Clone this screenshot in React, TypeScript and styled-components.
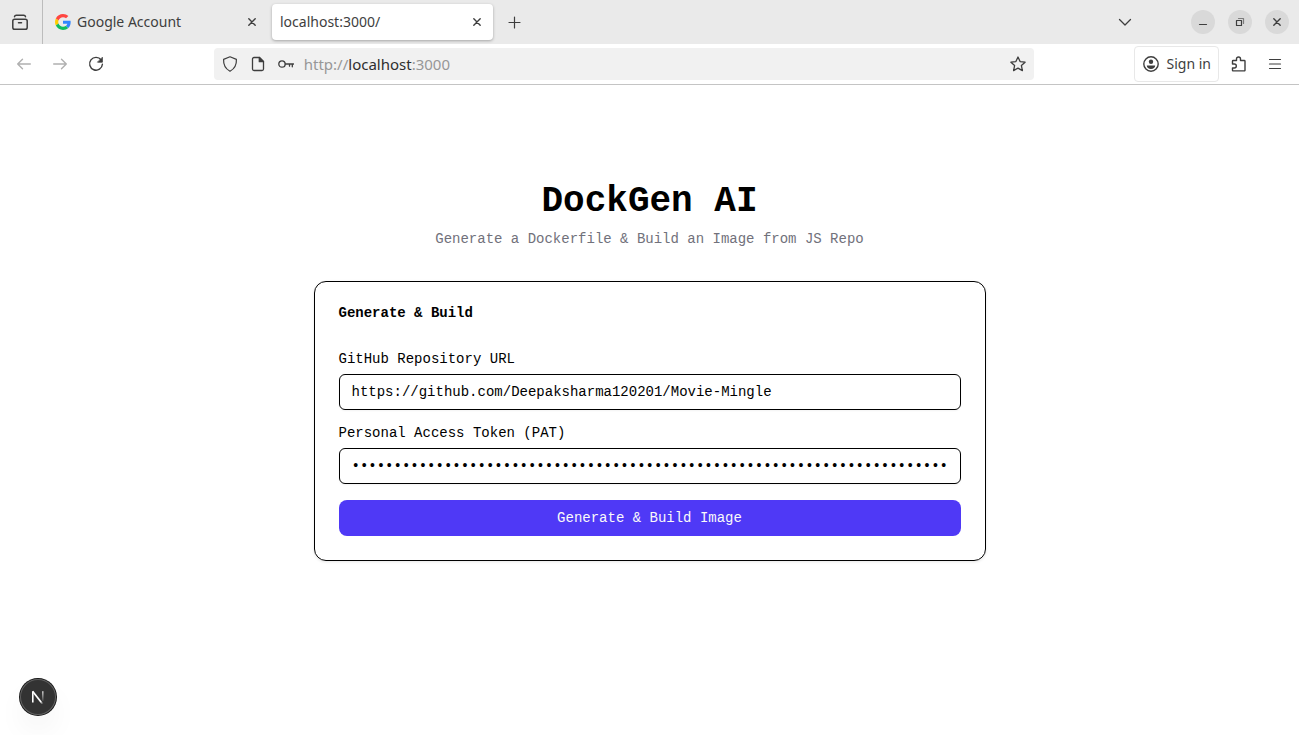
import React, { useState } from "react";
import styled, { createGlobalStyle } from "styled-components";

const GlobalStyle = createGlobalStyle`
  *, *::before, *::after { box-sizing: border-box; }
  html, body, #root { height: 100%; }
  body { margin: 0; background: #fff; color: #000; }
  button, input { font: inherit; color: inherit; margin: 0; }
  button { border: 0; padding: 0; background: none; cursor: pointer; }
  h1, h2, p { margin: 0; }
  svg { display: block; flex: none; }
`;

const Shell = styled.div`
  display: flex;
  flex-direction: column;
  min-height: 100vh;
`;

const Chrome = styled.header`
  font: 14px/20px "Noto Sans", "Open Sans", sans-serif;
  color: #3e3e3e;
`;

const TabStrip = styled.div`
  display: flex;
  align-items: center;
  height: 44px;
  padding-right: 10px;
  background: #eaeaea;
`;

const ViewButton = styled.button`
  display: grid;
  place-items: center;
  width: 43px;
  height: 44px;
  padding-right: 2px;
  border-right: 1px solid #bcbcbc;
`;

const TabList = styled.div`
  display: flex;
  gap: 4px;
  padding: 0 4px;
`;

const Tab = styled.div<{ $active?: boolean }>`
  display: flex;
  align-items: center;
  gap: 6px;
  width: 221px;
  height: 36px;
  padding: 0 8px;
  border-radius: 4px;
  background: ${(p) => (p.$active ? "#fff" : "transparent")};
  box-shadow: ${(p) => (p.$active ? "0 1px 3px rgba(0, 0, 0, 0.3)" : "none")};
`;

const TabTitle = styled.span`
  flex: 1;
  white-space: nowrap;
`;

const IconButton = styled.button<{ $size: number; $muted?: boolean }>`
  display: grid;
  place-items: center;
  flex: none;
  width: ${(p) => p.$size}px;
  height: ${(p) => p.$size}px;
  color: ${(p) => (p.$muted ? "#b0b0b0" : "inherit")};
`;

const Spacer = styled.div`
  flex: 1;
`;

const WindowControls = styled.div`
  display: flex;
  gap: 13px;
  margin-left: 48px;
`;

const WindowButton = styled(IconButton)`
  border-radius: 50%;
  background: #d9d9d9;
`;

const Toolbar = styled.div`
  display: flex;
  align-items: center;
  height: 41px;
  padding: 0 6px;
  border-bottom: 1px solid #c4c4c4;
  background: #fff;
`;

const AddressBar = styled.div`
  display: flex;
  align-items: center;
  flex: 0 1 820px;
  height: 32px;
  padding: 0 2px;
  border-radius: 4px;
  background: #f1f1f1;
`;

const Address = styled.div`
  flex: 1;
  margin-left: 4px;
  font-size: 15px;
  color: #979797;

  b {
    color: #2e2e2e;
    font-weight: 400;
  }
`;

const SignIn = styled.button`
  display: flex;
  align-items: center;
  gap: 8px;
  height: 36px;
  margin-right: 2px;
  padding: 0 7px 0 8px;
  border: 1px solid #e8e8e8;
  border-radius: 4px;
`;

const Page = styled.main`
  display: flex;
  flex: 1;
  flex-direction: column;
  align-items: center;
  padding: 96px 24px 24px;
  font: 14px/20px "Liberation Mono", monospace;
`;

const Title = styled.h1`
  font-size: 36px;
  line-height: 42px;
  font-weight: 700;
`;

const Subtitle = styled.p`
  margin-top: 6px;
  color: #71717b;
  text-align: center;
`;

const Card = styled.form`
  display: flex;
  flex-direction: column;
  gap: 16px;
  width: 100%;
  max-width: 672px;
  margin-top: 32px;
  padding: 24px;
  border: 1px solid #000;
  border-radius: 12px;
  box-shadow: 0 1px 3px rgba(0, 0, 0, 0.1);
`;

const CardTitle = styled.h2`
  margin-bottom: 16px;
  font-size: 14px;
  line-height: 14px;
  font-weight: 700;
`;

const Field = styled.div`
  display: flex;
  flex-direction: column;
  gap: 8px;
`;

const Label = styled.label`
  line-height: 14px;
`;

const Input = styled.input`
  width: 100%;
  height: 36px;
  padding: 4px 12px;
  border: 1px solid #000;
  border-radius: 6px;
  background: transparent;
  box-shadow: 0 1px 2px rgba(0, 0, 0, 0.05);
`;

const SubmitButton = styled.button`
  height: 36px;
  border-radius: 8px;
  background: #4f39f6;
  color: #fafafa;
`;

const DevBadge = styled.button`
  position: fixed;
  bottom: 20px;
  left: 20px;
  display: grid;
  place-items: center;
  width: 36px;
  height: 36px;
  border-radius: 50%;
  background: #333;
  box-shadow: 0 0 0 1px #171717, inset 0 0 0 1px #606060, 0 16px 32px -8px rgba(0, 0, 0, 0.14);
`;

type IconProps = { size?: number; width?: number; children: React.ReactNode };

const Icon = ({ size = 16, width = 1.3, children }: IconProps) => (
  <svg
    width={size}
    height={size}
    viewBox={`0 0 ${size} ${size}`}
    fill="none"
    stroke="currentColor"
    strokeWidth={width}
    strokeLinecap="round"
    strokeLinejoin="round"
    aria-hidden="true"
  >
    {children}
  </svg>
);

const CloseIcon = () => (
  <Icon width={1.4}>
    <path d="M4.800 4.800l6.400 6.400M11.200 4.800l-6.400 6.400" />
  </Icon>
);

const GoogleIcon = () => (
  <svg width="16" height="16" viewBox="0 0 48 48" aria-hidden="true">
    <path fill="#FF4641" d="M24 9.5c3.54 0 6.71 1.22 9.21 3.6l6.85-6.85C35.9 2.38 30.47 0 24 0 14.62 0 6.51 5.38 2.56 13.22l7.98 6.19C12.43 13.72 17.74 9.5 24 9.5z" />
    <path fill="#3086FF" d="M46.98 24.55c0-1.57-.15-3.09-.38-4.55H24v9.02h12.94c-.58 2.96-2.26 5.48-4.78 7.18l7.73 6c4.51-4.18 7.09-10.36 7.09-17.65z" />
    <path fill="#FFCC00" d="M10.53 28.59A14.5 14.5 0 0 1 9.77 24c0-1.6.27-3.14.76-4.59l-7.98-6.19A23.9 23.9 0 0 0 0 24c0 3.88.92 7.54 2.56 10.78z" />
    <path fill="#0EBC5F" d="M24 48c6.48 0 11.93-2.13 15.89-5.81l-7.73-6c-2.15 1.45-4.92 2.3-8.16 2.3-6.26 0-11.57-4.22-13.47-9.91l-7.98 6.19C6.51 42.62 14.62 48 24 48z" />
  </svg>
);

const NextMark = () => (
  <svg width="14" height="14" viewBox="0 0 14 14" fill="none" aria-hidden="true">
    <defs>
      <linearGradient id="diagonal" gradientUnits="userSpaceOnUse" x1="7" y1="7" x2="12" y2="14">
        <stop stopColor="#fff" />
        <stop offset="0.6" stopColor="#fff" />
        <stop offset="1" stopColor="#fff" stopOpacity="0" />
      </linearGradient>
      <linearGradient id="upright" gradientUnits="userSpaceOnUse" x1="12" y1="1" x2="12" y2="11">
        <stop stopColor="#fff" stopOpacity="0.8" />
        <stop offset="1" stopColor="#fff" stopOpacity="0.1" />
      </linearGradient>
    </defs>
    <path d="M1.800 12.500V1.500" stroke="#fff" strokeWidth="1.600" />
    <path d="M1.600 1.300l10.200 13" stroke="url(#diagonal)" strokeWidth="1.700" />
    <path d="M11.800 1.200v9.800" stroke="url(#upright)" strokeWidth="1.500" />
  </svg>
);

const BrowserChrome = () => (
  <Chrome>
    <TabStrip>
      <ViewButton aria-label="Recent browsing">
        <Icon size={18} width={1.5}>
          <rect x="1.8" y="6.2" width="14.4" height="10" rx="1.8" />
          <path d="M3.5 3.7c.2-1 .8-1.5 1.8-1.5h7.4c1 0 1.6.5 1.8 1.5M7.5 9.8h3" />
        </Icon>
      </ViewButton>
      <TabList>
        <Tab>
          <GoogleIcon />
          <TabTitle>Google Account</TabTitle>
          <IconButton $size={16} aria-label="Close Google Account">
            <CloseIcon />
          </IconButton>
        </Tab>
        <Tab $active>
          <TabTitle>localhost:3000/</TabTitle>
          <IconButton $size={16} aria-label="Close localhost">
            <CloseIcon />
          </IconButton>
        </Tab>
      </TabList>
      <IconButton $size={36} aria-label="New tab">
        <Icon width={1.2}>
          <path d="M7.500 3v11M2 8.500h11" />
        </Icon>
      </IconButton>
      <Spacer />
      <IconButton $size={36} aria-label="List all tabs">
        <Icon width={1.3}>
          <path d="M2.500 5.500L8 11l5.500-5.500" />
        </Icon>
      </IconButton>
      <WindowControls>
        <WindowButton $size={24} aria-label="Minimize">
          <Icon width={1.2}>
            <path d="M4.500 10.500h7" />
          </Icon>
        </WindowButton>
        <WindowButton $size={24} aria-label="Restore">
          <Icon width={1.2}>
            <path d="M4.500 6.500h5v5h-5z" />
            <path d="M6.500 4.500h5v5" opacity="0.6" />
          </Icon>
        </WindowButton>
        <WindowButton $size={24} aria-label="Close window">
          <CloseIcon />
        </WindowButton>
      </WindowControls>
    </TabStrip>
    <Toolbar>
      <IconButton $size={36} $muted aria-label="Back">
        <Icon width={1.4}>
          <path d="M14.300 8H1.700M6.500 3.200L1.700 8l4.800 4.800" />
        </Icon>
      </IconButton>
      <IconButton $size={36} $muted aria-label="Forward">
        <Icon width={1.4}>
          <path d="M1.700 8h12.600M9.500 3.200L14.300 8l-4.800 4.800" />
        </Icon>
      </IconButton>
      <IconButton $size={36} aria-label="Reload">
        <Icon width={1.4}>
          <path d="M13.200 4A6.400 6.400 0 1 0 14.400 8.200" />
          <path d="M14.400 1.600v4.600H9.800z" fill="currentColor" strokeWidth="0.8" />
        </Icon>
      </IconButton>
      <Spacer />
      <AddressBar>
        <IconButton $size={28} aria-label="Tracking protection">
          <Icon width={1.2}>
            <path d="M8 .800L14.400 3.400c.3 5.200-1.400 9.200-6.400 11.900C3 12.600 1.300 8.600 1.600 3.400z" />
          </Icon>
        </IconButton>
        <IconButton $size={28} aria-label="Site information">
          <Icon>
            <path d="M9.500 1.500H4A1.500 1.500 0 0 0 2.500 3v10A1.500 1.500 0 0 0 4 14.500h8a1.500 1.500 0 0 0 1.500-1.500V5.500z" />
            <path d="M9.300 1.500v4.200h4.200z" fill="currentColor" />
          </Icon>
        </IconButton>
        <IconButton $size={28} aria-label="Saved password">
          <Icon>
            <circle cx="4" cy="8" r="3.200" />
            <path d="M7.300 8h8.200M11.500 8v2.200M14.300 8v2.800" />
          </Icon>
        </IconButton>
        <Address>
          http://<b>localhost</b>:3000
        </Address>
        <IconButton $size={28} aria-label="Bookmark this page">
          <Icon>
            <path d="M8 1l2.100 4.600 5 .600-3.700 3.400 1 5L8 12.100l-4.400 2.500 1-5L.900 6.200l5-.600z" />
          </Icon>
        </IconButton>
      </AddressBar>
      <Spacer />
      <SignIn>
        <Icon width={1.4}>
          <circle cx="8" cy="8" r="7.200" />
          <circle cx="8" cy="5.800" r="2.200" fill="currentColor" stroke="none" />
          <path d="M3.800 9.500h8.400c0 2-1.800 3.500-4.200 3.500s-4.200-1.500-4.200-3.500z" fill="currentColor" stroke="none" />
        </Icon>
        Sign in
      </SignIn>
      <IconButton $size={36} aria-label="Extensions">
        <Icon width={1.4}>
          <path d="M1.500 8V5.200a.7.7 0 0 1 .7-.7h3.300V3a2 2 0 0 1 4 0v1.500h3.800a.7.7 0 0 1 .7.700v9a.7.700 0 0 1-.7.700H2.200a.7.700 0 0 1-.7-.700V12h1.800a2 2 0 0 0 0-4z" />
        </Icon>
      </IconButton>
      <IconButton $size={36} aria-label="Menu">
        <Icon width={1.2}>
          <path d="M2.500 3.500h11M2.500 8h11M2.500 12.500h11" />
        </Icon>
      </IconButton>
    </Toolbar>
  </Chrome>
);

export default function App() {
  const [repo, setRepo] = useState("https://github.com/Deepaksharma120201/Movie-Mingle");
  const [token, setToken] = useState("x".repeat(71));

  return (
    <Shell>
      <GlobalStyle />
      <BrowserChrome />
      <Page>
        <Title>DockGen AI</Title>
        <Subtitle>Generate a Dockerfile &amp; Build an Image from JS Repo</Subtitle>
        <Card onSubmit={(e) => e.preventDefault()}>
          <CardTitle>Generate &amp; Build</CardTitle>
          <Field>
            <Label htmlFor="repo">GitHub Repository URL</Label>
            <Input id="repo" value={repo} onChange={(e) => setRepo(e.target.value)} />
          </Field>
          <Field>
            <Label htmlFor="token">Personal Access Token (PAT)</Label>
            <Input
              id="token"
              type="password"
              autoComplete="off"
              value={token}
              onChange={(e) => setToken(e.target.value)}
            />
          </Field>
          <SubmitButton type="submit">Generate &amp; Build Image</SubmitButton>
        </Card>
      </Page>
      <DevBadge aria-label="Open Next.js Dev Tools">
        <NextMark />
      </DevBadge>
    </Shell>
  );
}
